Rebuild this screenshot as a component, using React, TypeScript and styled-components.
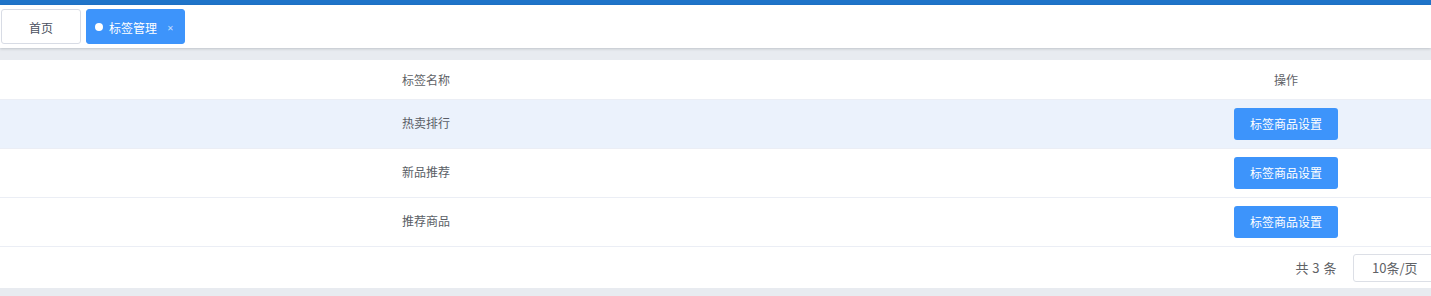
import React from 'react';
import styled, { createGlobalStyle } from 'styled-components';

const GlobalStyle = createGlobalStyle`
  html, body {
    margin: 0;
    padding: 0;
    background: #fff;
    font-family: "Helvetica Neue", "Noto Sans CJK SC", "Liberation Sans", sans-serif;
    -webkit-font-smoothing: antialiased;
  }
`;

const Page = styled.div`
  width: 1431px;
  height: 296px;
  overflow: hidden;
  background: #e8ebf0;
  display: flex;
  flex-direction: column;
`;

const TopBar = styled.div`
  height: 5px;
  background: #1f74c9;
`;

const TagsView = styled.div`
  height: 43px;
  background: #fff;
  display: flex;
  align-items: center;
  gap: 5px;
  padding-left: 1px;
  box-shadow: 0 1px 3px rgba(0, 21, 41, 0.12), 0 1px 2px rgba(0, 0, 0, 0.06);
  position: relative;
  z-index: 1;
`;

const Tag = styled.div<{ $active?: boolean }>`
  box-sizing: border-box;
  height: 35px;
  display: flex;
  align-items: center;
  gap: 6px;
  border-radius: 3px;
  font-size: 12px;
  color: ${p => (p.$active ? '#fff' : '#495060')};
  background: ${p => (p.$active ? '#3d94fb' : '#fff')};
  border: 1px solid ${p => (p.$active ? '#3d94fb' : '#d8dce5')};
  width: ${p => (p.$active ? '99px' : '80px')};
  padding: ${p => (p.$active ? '1px 0 0 8px' : '1px 0 0')};
  justify-content: ${p => (p.$active ? 'flex-start' : 'center')};
`;

const Dot = styled.span`
  width: 8px;
  height: 8px;
  border-radius: 50%;
  background: #fff;
  margin-top: -1px;
`;

const Close = styled.span`
  font-size: 8px;
  color: rgba(255, 255, 255, 0.7);
  margin-left: 4px;
  padding-top: 1px;
`;

const Content = styled.div`
  margin-top: 12px;
  background: #fff;
`;

const Row = styled.div<{ $head?: boolean; $hover?: boolean }>`
  box-sizing: border-box;
  display: grid;
  grid-template-columns: 390px 1fr 290px;
  align-items: center;
  height: ${p => (p.$head ? '40px' : '49px')};
  padding-bottom: ${p => (p.$head ? '0' : '3px')};
  border-bottom: 1px solid #ebeef5;
  background: ${p => (p.$hover ? '#ebf2fc' : '#fff')};
  font-size: 12px;
  color: ${p => (p.$head ? '#606266' : '#5a5e66')};
`;

const Cell = styled.div<{ $center?: boolean }>`
  text-align: ${p => (p.$center ? 'center' : 'left')};
  padding: ${p => (p.$center ? '0' : '0 0 0 12px')};
`;

const Button = styled.button`
  height: 32px;
  padding: 0 16px 2px;
  margin-top: 3px;
  border: none;
  border-radius: 3px;
  background: #3d94fb;
  color: #fff;
  font-family: inherit;
  font-size: 12px;
  cursor: pointer;
`;

const Pagination = styled.div`
  height: 41px;
  display: flex;
  align-items: center;
  justify-content: flex-end;
  gap: 16px;
  margin-right: -40px;
  font-size: 13px;
  color: #606266;
`;

const Total = styled.span`
  letter-spacing: 0.5px;
`;

const SizeSelect = styled.div`
  box-sizing: border-box;
  width: 118px;
  height: 28px;
  border: 1px solid #dcdfe6;
  border-radius: 3px;
  display: flex;
  align-items: center;
  padding-left: 18px;
  font-size: 13px;
  color: #606266;
`;

const rows = ['热卖排行', '新品推荐', '推荐商品'];

export default function App() {
  return (
    <>
      <GlobalStyle />
      <Page>
        <TopBar />
        <TagsView>
          <Tag>首页</Tag>
          <Tag $active>
            <Dot />
            标签管理
            <Close>✕</Close>
          </Tag>
        </TagsView>
        <Content>
          <Row $head>
            <Cell />
            <Cell>标签名称</Cell>
            <Cell $center>操作</Cell>
          </Row>
          {rows.map((name, i) => (
            <Row key={name} $hover={i === 0}>
              <Cell />
              <Cell>{name}</Cell>
              <Cell $center>
                <Button>标签商品设置</Button>
              </Cell>
            </Row>
          ))}
          <Pagination>
            <Total>共 3 条</Total>
            <SizeSelect>10条/页</SizeSelect>
          </Pagination>
        </Content>
      </Page>
    </>
  );
}
